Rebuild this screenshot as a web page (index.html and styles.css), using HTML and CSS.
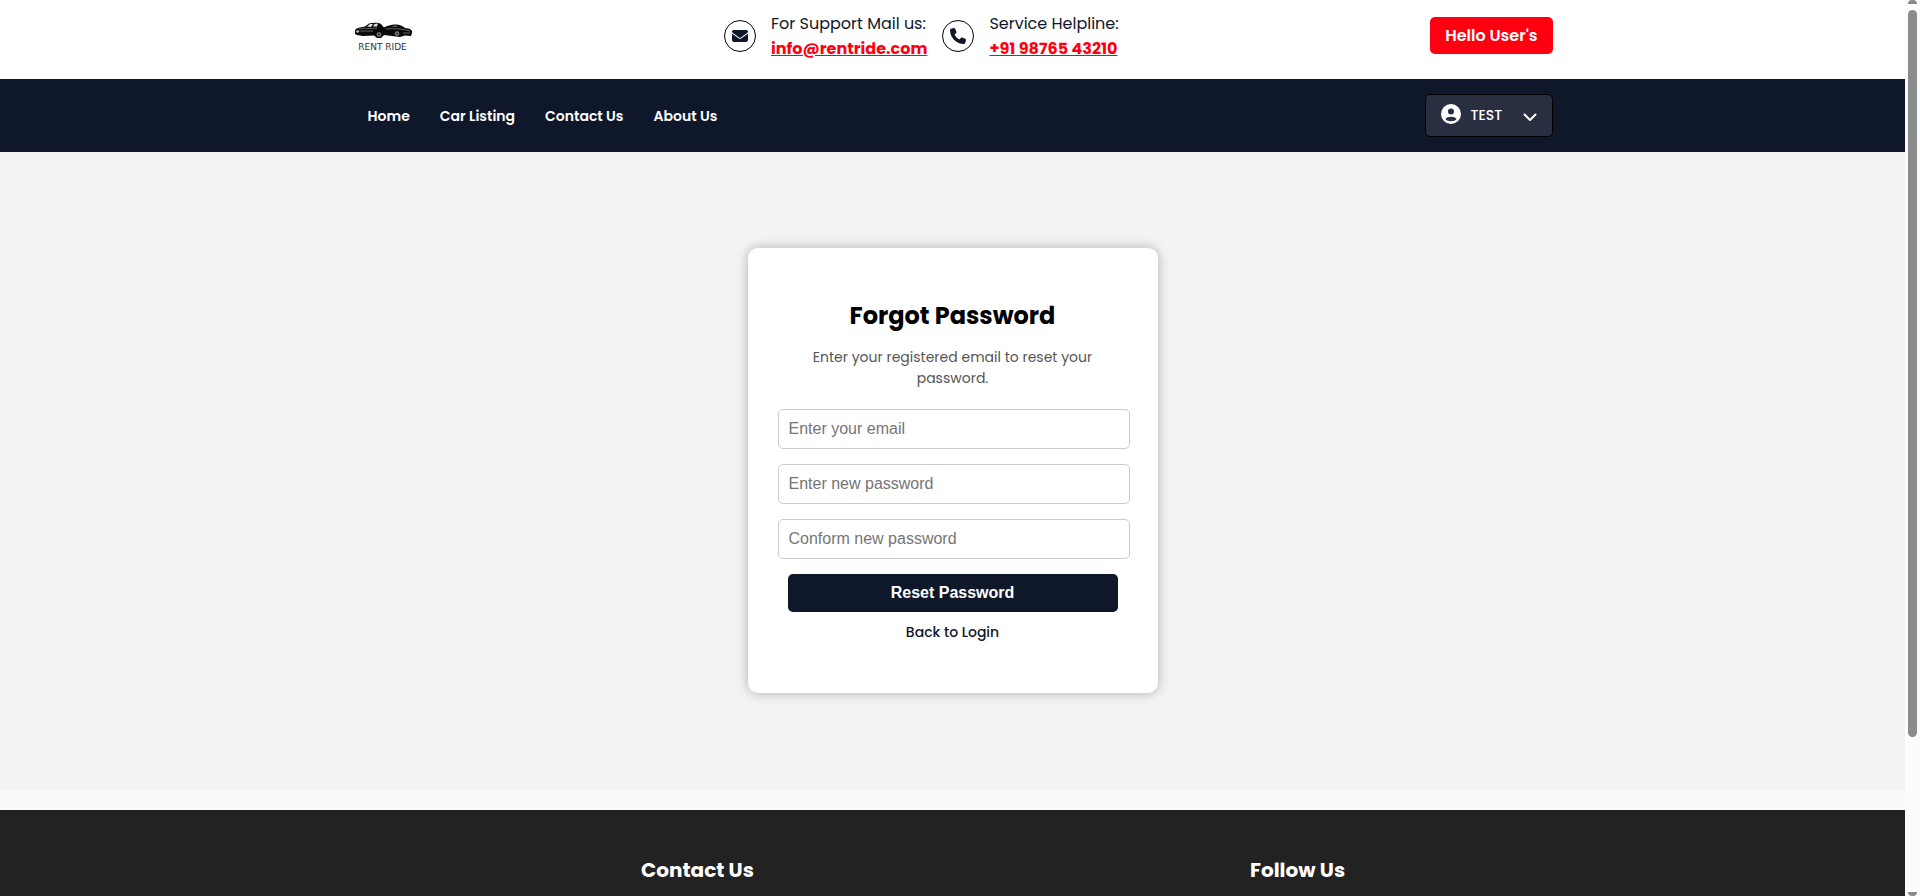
FILE: index.html
```html
<!DOCTYPE html>
<html lang="en">
<head>
<meta charset="utf-8">
<meta name="viewport" content="width=device-width, initial-scale=1">
<title>Rent Ride</title>
<link rel="stylesheet" href="styles.css">
</head>
<body>
<div class="page">
  <header class="topbar">
    <div class="topbar-inner container">
      <a class="logo" href="#">
        <svg class="logo-cars" viewBox="0 0 60 17" width="60" height="17" aria-hidden="true">
          <path d="M2 9C2 6.500 5 5.500 12 4.500L16 1.500C20 .3 26 .3 28 2L31 5.500C33 4 37 3 41 2.500C46 2 49 3.500 52 6C57 6.500 60 8 59 11L58 14L52 13.500L47 15L31 13L28 16L24 16L21 13.500L10 14L4 13L2 12Z" fill="#0a0a0a"/>
          <path d="M14 4.500L17 2H20L18 5ZM21.500 2L25 1.500L24 4.500H20Z" fill="#ddd"/>
          <path d="M38 5L42 3.500L46 4.500Z" fill="#777"/>
          <path d="M6 6.500C12 6 18 7 24 6M5 9H20M33 7C42 6 50 7 57 9M50 11H57" stroke="#777" fill="none" stroke-width=".8"/>
          <circle cx="26" cy="12.500" r="2.300" fill="#888"/><circle cx="26" cy="12.500" r="1" fill="#111"/>
          <circle cx="44" cy="11.500" r="2.200" fill="#888"/><circle cx="44" cy="11.500" r="1" fill="#222"/>
          <circle cx="4.500" cy="9.500" r="1.200" fill="#ccc"/>
        </svg>
        <span class="logo-name">RENT RIDE</span>
      </a>
      <div class="contacts">
        <div class="contact">
          <span class="contact-icon">
            <svg viewBox="0 0 512 512" width="16" height="16" aria-hidden="true"><path fill="currentColor" d="M48 64C21.500 64 0 85.500 0 112c0 15.100 7.100 29.300 19.200 38.400L236.800 313.600c11.400 8.500 27 8.500 38.400 0L492.800 150.400c12.100-9.100 19.200-23.300 19.200-38.400c0-26.500-21.500-48-48-48H48zM0 176V384c0 35.300 28.700 64 64 64H448c35.300 0 64-28.700 64-64V176L294.400 339.200c-22.800 17.100-54 17.100-76.800 0L0 176z"/></svg>
          </span>
          <div>
            <p class="contact-label">For Support Mail us:</p>
            <a class="contact-link" href="mailto:info@rentride.com">info@rentride.com</a>
          </div>
        </div>
        <div class="contact">
          <span class="contact-icon">
            <svg viewBox="0 0 512 512" width="16" height="16" aria-hidden="true"><path fill="currentColor" d="M164.900 24.600c-7.700-18.600-28-28.500-47.400-23.200l-88 24C12.100 30.200 0 46 0 64C0 311.400 200.600 512 448 512c18 0 33.800-12.100 38.600-29.500l24-88c5.300-19.400-4.600-39.700-23.200-47.400l-96-40c-16.300-6.800-35.200-2.100-46.300 11.600L304.700 368C234.300 334.700 177.300 277.700 144 207.300L193.300 167c13.700-11.200 18.400-30 11.600-46.300l-40-96z"/></svg>
          </span>
          <div>
            <p class="contact-label">Service Helpline:</p>
            <a class="contact-link" href="tel:+919876543210">+91 98765 43210</a>
          </div>
        </div>
      </div>
      <button class="hello" type="button">Hello User's</button>
    </div>
  </header>

  <nav class="navbar">
    <div class="navbar-inner container">
      <ul class="menu">
        <li><a href="#">Home</a></li>
        <li><a href="#">Car Listing</a></li>
        <li><a href="#">Contact Us</a></li>
        <li><a href="#">About Us</a></li>
      </ul>
      <button class="account" type="button">
        <svg class="account-icon" viewBox="0 0 20 20" width="20" height="20" aria-hidden="true"><circle cx="10" cy="10" r="10" fill="#fff"/><circle cx="10" cy="7.500" r="3" fill="#292f41"/><path d="M4.500 15C6 12 14 12 15.500 15C14 18 6 18 4.500 15Z" fill="#292f41"/></svg>
        <span class="account-name">TEST</span>
        <svg viewBox="0 0 14 14" width="14" height="14" aria-hidden="true"><path d="M1.500 5.500L7 11L12.500 5.500" fill="none" stroke="#fff" stroke-width="2" stroke-linecap="round" stroke-linejoin="round"/></svg>
      </button>
    </div>
  </nav>

  <main class="main">
    <form class="card">
      <h1 class="card-title">Forgot Password</h1>
      <p class="card-text">Enter your registered email to reset your password.</p>
      <input class="field" type="email" placeholder="Enter your email" aria-label="Email">
      <input class="field" type="password" placeholder="Enter new password" aria-label="New password">
      <input class="field" type="password" placeholder="Conform new password" aria-label="Confirm new password">
      <button class="submit" type="submit">Reset Password</button>
      <a class="back" href="#">Back to Login</a>
    </form>
  </main>

  <footer class="footer">
    <h2 class="footer-title footer-contact">Contact Us</h2>
    <h2 class="footer-title">Follow Us</h2>
  </footer>
</div>
<div class="scrollbar" aria-hidden="true">
  <span class="scroll-up"></span>
  <span class="scroll-thumb"></span>
  <span class="scroll-space"></span>
  <span class="scroll-down"></span>
</div>
</body>
</html>
```
FILE: styles.css
```css
* { box-sizing: border-box; }

body {
  display: flex;
  height: 100vh;
  margin: 0;
  overflow: hidden;
  background: #f8fafc;
  color: #0f172a;
  font: 16px/25px Poppins, Inter, sans-serif;
}

p, h1, h2, ul { margin: 0; padding: 0; }
button { font-family: inherit; cursor: pointer; }

.page { display: flex; flex: 1; flex-direction: column; min-width: 0; }
.page > * { flex-shrink: 0; }
.container { width: 100%; max-width: 1200px; margin: 0 auto; }

.topbar { background: #fff; }
.topbar-inner {
  display: flex;
  align-items: flex-start;
  justify-content: space-between;
  padding: 11px 0 18px;
}

.logo {
  display: flex;
  flex-direction: column;
  align-items: center;
  gap: 4px;
  width: 60px;
  padding-top: 11px;
  color: #333;
  text-decoration: none;
}
.logo-name { font: 9px/8px "DejaVu Sans", sans-serif; white-space: nowrap; }

.contacts { display: flex; gap: 15px; }
.contact { display: flex; align-items: center; gap: 15px; }
.contact-icon {
  display: flex;
  align-items: center;
  justify-content: center;
  width: 32px;
  height: 32px;
  border: 1px solid #000;
  border-radius: 50%;
}
.contact-link { display: block; color: #ff0011; font-weight: 700; }

.hello {
  height: 37px;
  margin-top: 6px;
  padding: 0 15px;
  border: 0;
  border-radius: 5px;
  background: #ff0011;
  color: #fff;
  font-size: 16px;
  font-weight: 600;
}

.navbar { background: #0f172a; }
.navbar-inner { display: flex; align-items: center; justify-content: space-between; padding: 15px 0; }
.menu { display: flex; gap: 30px; padding-left: 15px; list-style: none; }
.menu a { color: #fff; font-size: 14px; font-weight: 600; text-decoration: none; }
.account {
  display: flex;
  align-items: center;
  width: 128px;
  height: 43px;
  padding: 0 15px;
  border: 1px solid #000;
  border-radius: 5px;
  background: #292f41;
  color: #fff;
}
.account-icon { margin-bottom: 3px; }
.account-name { flex: 1; padding-left: 10px; font-size: 14px; font-weight: 500; text-align: left; }

.main {
  display: flex;
  justify-content: center;
  padding: 96px 0 97px;
  background: #f3f3f3;
}
.card {
  display: flex;
  flex-direction: column;
  gap: 15px;
  width: 410px;
  padding: 52px 30px 50px;
  border-radius: 10px;
  background: #fff;
  box-shadow: 0 0 12px rgba(0, 0, 0, .28);
}
.card-title { color: #000; font-size: 24px; line-height: 32px; text-align: center; }
.card-text { padding: 0 20px; margin-bottom: 5px; color: #555; font-size: 14px; line-height: 21px; text-align: center; }
.field {
  width: 352px;
  height: 40px;
  padding: 0 10px;
  border: 1px solid #ccc;
  border-radius: 5px;
  font: 16px "Liberation Sans", Arial, sans-serif;
}
.field::placeholder { color: #757575; }
.submit {
  height: 38px;
  margin: 0 10px;
  border: 0;
  border-radius: 5px;
  background: #0f172a;
  color: #fff;
  font: bold 16px "Liberation Sans", Arial, sans-serif;
}
.back { align-self: center; margin-top: -5px; color: #0f172a; font-size: 14px; line-height: 21px; font-weight: 500; text-decoration: none; }

.footer {
  display: grid;
  flex: 1 0 auto;
  grid-template-columns: repeat(3, 1fr);
  margin-top: 20px;
  padding: 45px 46px 0 32px;
  background: #222;
  color: #fff;
}
.footer-title { font-size: 20px; line-height: 30px; }
.footer-contact { grid-column: 2; }

.scrollbar {
  display: flex;
  flex-direction: column;
  align-items: center;
  width: 15px;
  background: #fcfcfc;
}
.scrollbar span { width: 9px; }
.scroll-up { height: 4px; border-radius: 4px 4px 0 0; background: #8b8b8b; }
.scroll-thumb { flex: 727; margin-top: 6px; border-radius: 5px; background: #8b8b8b; }
.scroll-space { flex: 155; }
.scroll-down { height: 4px; border-radius: 0 0 4px 4px; background: #8b8b8b; }
```
